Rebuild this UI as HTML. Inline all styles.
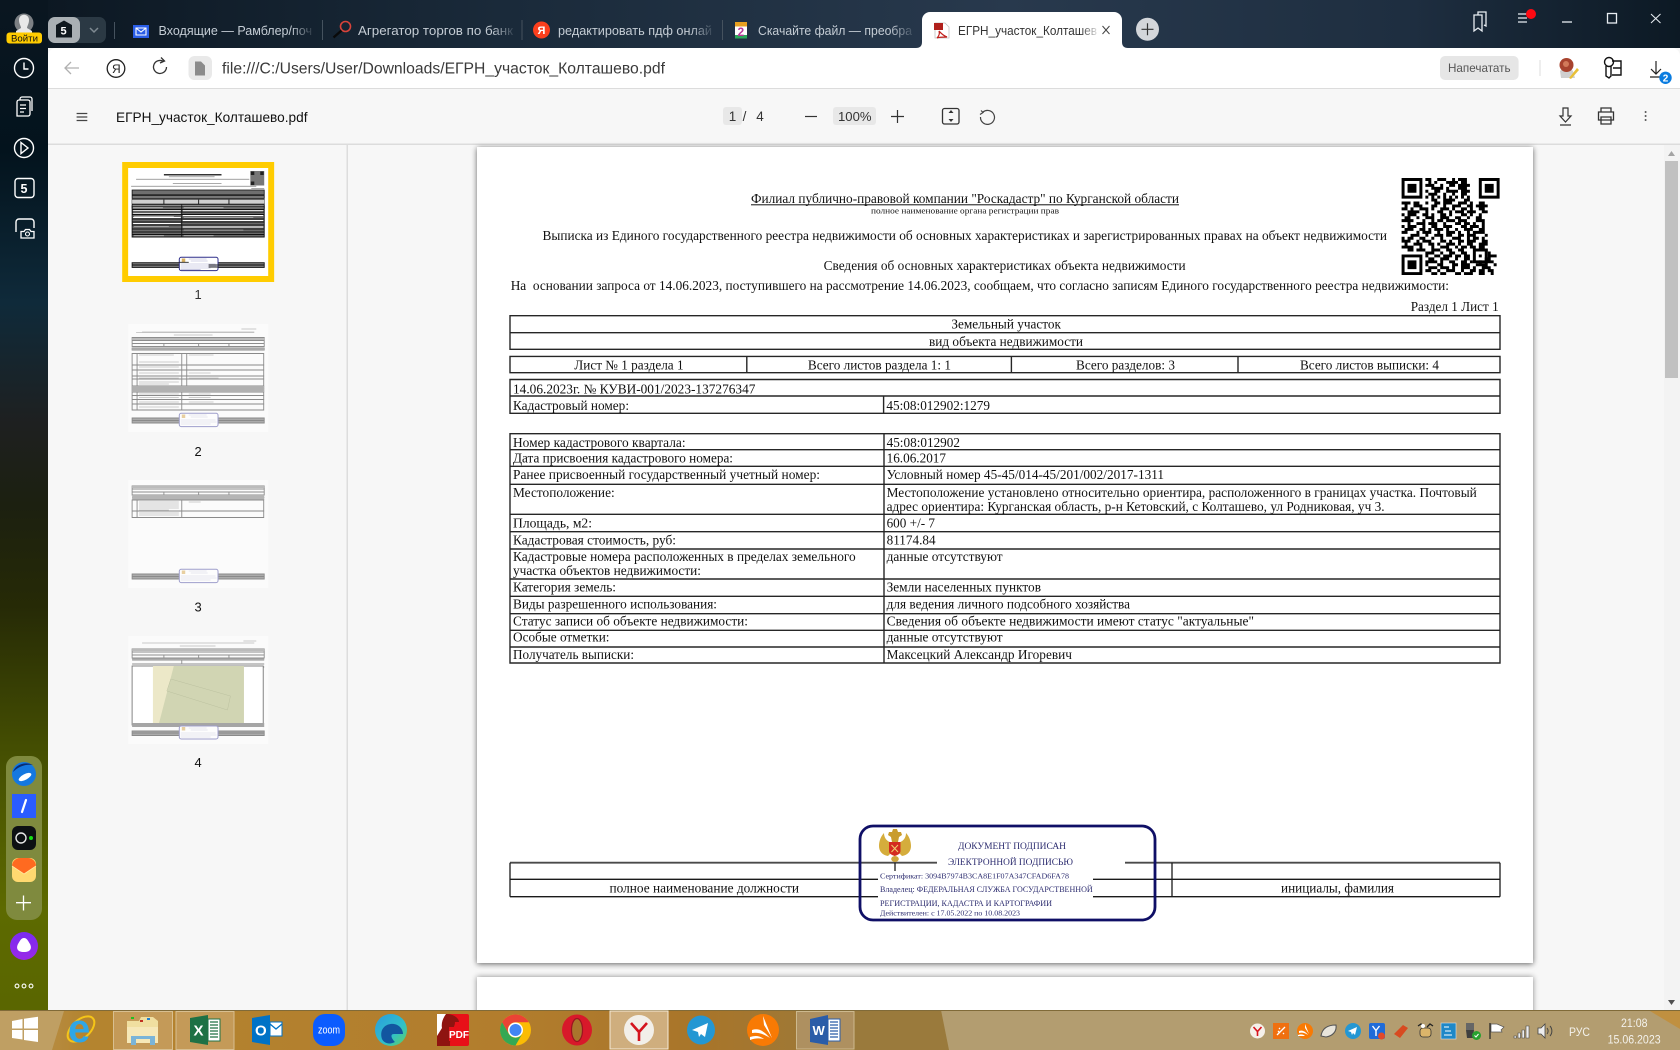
<!DOCTYPE html>
<html><head><meta charset="utf-8"><title>ЕГРН_участок_Колташево.pdf</title>
<style>
html,body{margin:0;padding:0;width:1680px;height:1050px;overflow:hidden;background:#f7f7f7}
svg{display:block;position:absolute;left:0;top:0}
.s{font-family:"Liberation Serif","Noto Serif CJK SC",serif;font-size:13.33px;fill:#111}
.a{font-family:"Liberation Sans","Noto Sans CJK SC",sans-serif}
.st{font-family:"Liberation Serif","Noto Serif CJK SC",serif;fill:#2d2d70}
</style></head><body>
<svg width="1680" height="1050" viewBox="0 0 1680 1050" xmlns="http://www.w3.org/2000/svg">
<defs>
<linearGradient id="gTop" x1="0" x2="1" y1="0" y2="0"><stop offset="0" stop-color="#0b1620"/><stop offset=".3" stop-color="#1a2a3a"/><stop offset=".6" stop-color="#28394d"/><stop offset=".84" stop-color="#1e2e40"/><stop offset="1" stop-color="#0c1924"/></linearGradient>
<linearGradient id="gSide" x1="0" x2="0" y1="0" y2="1"><stop offset="0" stop-color="#0a1620"/><stop offset=".15" stop-color="#03131d"/><stop offset=".3" stop-color="#0f2a3a"/><stop offset=".42" stop-color="#1e2020"/><stop offset=".5" stop-color="#1c2010"/><stop offset=".6" stop-color="#262a06"/><stop offset=".74" stop-color="#444e02"/><stop offset=".9" stop-color="#5d6a00"/><stop offset="1" stop-color="#5a6600"/></linearGradient>
<linearGradient id="gTask" x1="0" x2="1" y1="0" y2="0"><stop offset="0" stop-color="#b9965a"/><stop offset=".05" stop-color="#b4842f"/><stop offset=".3" stop-color="#b27d2d"/><stop offset=".42" stop-color="#a8752a"/><stop offset=".51" stop-color="#9a7a3c"/><stop offset="1" stop-color="#9b7c3e"/></linearGradient>
<linearGradient id="fd" x1="0" x2="1" y1="0" y2="0"><stop offset=".86" stop-color="#c4ccd4"/><stop offset="1" stop-color="#c4ccd4" stop-opacity=".15"/></linearGradient>
<linearGradient id="fa" x1="0" x2="1" y1="0" y2="0"><stop offset=".88" stop-color="#333"/><stop offset="1" stop-color="#333" stop-opacity=".15"/></linearGradient>
<linearGradient id="edge" x1="0" x2="1" y1="0" y2="1"><stop offset="0" stop-color="#2a9ce0"/><stop offset=".6" stop-color="#30c0c8"/><stop offset="1" stop-color="#60d060"/></linearGradient>
<linearGradient id="mail" x1="0" x2="0" y1="0" y2="1"><stop offset="0" stop-color="#ff5a1e"/><stop offset=".5" stop-color="#ffb030"/><stop offset="1" stop-color="#ffdb70"/></linearGradient>
<linearGradient id="ali" x1="0" x2="0" y1="0" y2="1"><stop offset="0" stop-color="#7a2cf0"/><stop offset="1" stop-color="#9a28e8"/></linearGradient>
</defs>

<!-- frame backgrounds -->
<rect x="0" y="0" width="1680" height="48" fill="url(#gTop)"/>
<rect x="0" y="0" width="48" height="1010" fill="url(#gSide)"/>
<path d="M48 1010V56a8 8 0 0 1 8-8H1672a8 8 0 0 1 8 8V1010z" fill="#fff"/>
<rect x="48" y="88" width="1632" height="922" fill="#f7f7f7"/>
<rect x="48" y="88" width="1632" height="1" fill="#dcdcdc"/>
<rect x="48" y="143.5" width="1632" height="1.5" fill="#dcdcdc"/>
<rect x="346.5" y="145" width="1.5" height="865" fill="#dddddd"/>

<!-- main pdf pages -->
<rect x="477" y="147" width="1056" height="816" fill="#fff" style="filter:drop-shadow(0 1px 3px rgba(0,0,0,.6))"/>
<rect x="477" y="977" width="1056" height="40" fill="#fff" style="filter:drop-shadow(0 0 3px rgba(0,0,0,.45))"/>

<!-- scrollbar -->
<rect x="1664" y="145" width="16" height="865" fill="#f3f3f3"/>
<rect x="1665" y="161" width="13" height="217" fill="#c1c1c1"/>
<path d="M1668 156l3.5-5 3.500 5z" fill="#a3a3a3"/>
<path d="M1668 1000l3.500 5 3.500-5z" fill="#505050"/>

<!-- PDF text -->
<g>
<text class="s" x="751" y="203" textLength="428" lengthAdjust="spacingAndGlyphs">Филиал публично-правовой компании "Роскадастр" по Курганской области</text>
<rect x="751" y="204.300" width="428" height="1" fill="#111"/>
<text class="s" style="font-size:8px" x="871" y="213.500" textLength="188" lengthAdjust="spacingAndGlyphs">полное наименование органа регистрации прав</text>
<text class="s" x="542.500" y="240" textLength="844.500" lengthAdjust="spacingAndGlyphs">Выписка из Единого государственного реестра недвижимости об основных характеристиках и зарегистрированных правах на объект недвижимости</text>
<text class="s" x="823.600" y="270" textLength="362" lengthAdjust="spacingAndGlyphs">Сведения об основных характеристиках объекта недвижимости</text>
<text class="s" x="510.700" y="290" textLength="938.300" lengthAdjust="spacingAndGlyphs" xml:space="preserve">На  основании запроса от 14.06.2023, поступившего на рассмотрение 14.06.2023, сообщаем, что согласно записям Единого государственного реестра недвижимости:</text>
<text class="s" x="1410.700" y="311" textLength="88" lengthAdjust="spacingAndGlyphs">Раздел 1 Лист 1</text>
</g>

<!-- tables -->
<path fill="none" stroke="#262626" stroke-width="1.400" d="M510 315.700H1500V349.300H510zM510 332.700H1500
M510 356.400H1500V372.700H510zM746.800 356.400V372.700M1011.400 356.400V372.700M1238 356.400V372.700
M510 379.500H1500V413.300H510zM510 396H1500M883.600 396V413.300
M510 433.700H1500V663H510zM884 433.700V663M510 449.700H1500M510 466.300H1500M510 484.300H1500M510 514.300H1500M510 531.700H1500M510 549H1500M510 579H1500M510 596.300H1500M510 613.700H1500M510 630.300H1500M510 647H1500"/>

<text class="s" x="951.400" y="328.700" textLength="109.600" lengthAdjust="spacingAndGlyphs">Земельный участок</text>
<text class="s" x="929" y="346" textLength="154" lengthAdjust="spacingAndGlyphs">вид объекта недвижимости</text>
<text class="s" x="574.300" y="369.300" textLength="109.300" lengthAdjust="spacingAndGlyphs">Лист № 1 раздела 1</text>
<text class="s" x="807.900" y="369.300" textLength="143.100" lengthAdjust="spacingAndGlyphs">Всего листов раздела 1: 1</text>
<text class="s" x="1076" y="369.300" textLength="99" lengthAdjust="spacingAndGlyphs">Всего разделов: 3</text>
<text class="s" x="1300" y="369.300" textLength="139" lengthAdjust="spacingAndGlyphs">Всего листов выписки: 4</text>
<text class="s" x="513" y="393.300" textLength="242.400" lengthAdjust="spacingAndGlyphs">14.06.2023г. № КУВИ-001/2023-137276347</text>
<text class="s" x="513" y="410" textLength="116" lengthAdjust="spacingAndGlyphs">Кадастровый номер:</text>
<text class="s" x="886.400" y="410" textLength="103.600" lengthAdjust="spacingAndGlyphs">45:08:012902:1279</text>

<text class="s" x="513" y="447" textLength="172.600" lengthAdjust="spacingAndGlyphs">Номер кадастрового квартала:</text>
<text class="s" x="886.600" y="447" textLength="73.400" lengthAdjust="spacingAndGlyphs">45:08:012902</text>
<text class="s" x="513" y="462.700" textLength="220" lengthAdjust="spacingAndGlyphs">Дата присвоения кадастрового номера:</text>
<text class="s" x="886.600" y="462.700" textLength="59.400" lengthAdjust="spacingAndGlyphs">16.06.2017</text>
<text class="s" x="513" y="479" textLength="307" lengthAdjust="spacingAndGlyphs">Ранее присвоенный государственный учетный номер:</text>
<text class="s" x="886.600" y="479" textLength="277.400" lengthAdjust="spacingAndGlyphs">Условный номер 45-45/014-45/201/002/2017-1311</text>
<text class="s" x="513" y="497" textLength="101.700" lengthAdjust="spacingAndGlyphs">Местоположение:</text>
<text class="s" x="886.600" y="497" textLength="590.200" lengthAdjust="spacingAndGlyphs">Местоположение установлено относительно ориентира, расположенного в границах участка. Почтовый</text>
<text class="s" x="886.600" y="511" textLength="498" lengthAdjust="spacingAndGlyphs">адрес ориентира: Курганская область, р-н Кетовский, с Колташево, ул Родниковая, уч 3.</text>
<text class="s" x="513" y="527.700" textLength="79" lengthAdjust="spacingAndGlyphs">Площадь, м2:</text>
<text class="s" x="886.600" y="527.700" textLength="48.400" lengthAdjust="spacingAndGlyphs">600 +/- 7</text>
<text class="s" x="513" y="544.300" textLength="163" lengthAdjust="spacingAndGlyphs">Кадастровая стоимость, руб:</text>
<text class="s" x="886.600" y="544.300" textLength="49" lengthAdjust="spacingAndGlyphs">81174.84</text>
<text class="s" x="513" y="561" textLength="342.700" lengthAdjust="spacingAndGlyphs">Кадастровые номера расположенных в пределах земельного</text>
<text class="s" x="513" y="575" textLength="188" lengthAdjust="spacingAndGlyphs">участка объектов недвижимости:</text>
<text class="s" x="886.600" y="561" textLength="116" lengthAdjust="spacingAndGlyphs">данные отсутствуют</text>
<text class="s" x="513" y="591.700" textLength="103" lengthAdjust="spacingAndGlyphs">Категория земель:</text>
<text class="s" x="886.600" y="591.700" textLength="154.400" lengthAdjust="spacingAndGlyphs">Земли населенных пунктов</text>
<text class="s" x="513" y="608.700" textLength="204" lengthAdjust="spacingAndGlyphs">Виды разрешенного использования:</text>
<text class="s" x="886.600" y="608.700" textLength="243.400" lengthAdjust="spacingAndGlyphs">для ведения личного подсобного хозяйства</text>
<text class="s" x="513" y="625.700" textLength="235" lengthAdjust="spacingAndGlyphs">Статус записи об объекте недвижимости:</text>
<text class="s" x="886.600" y="625.700" textLength="367.400" lengthAdjust="spacingAndGlyphs">Сведения об объекте недвижимости имеют статус "актуальные"</text>
<text class="s" x="513" y="641.700" textLength="96.500" lengthAdjust="spacingAndGlyphs">Особые отметки:</text>
<text class="s" x="886.600" y="641.700" textLength="116" lengthAdjust="spacingAndGlyphs">данные отсутствуют</text>
<text class="s" x="513" y="659" textLength="121" lengthAdjust="spacingAndGlyphs">Получатель выписки:</text>
<text class="s" x="886.600" y="659" textLength="185.400" lengthAdjust="spacingAndGlyphs">Максецкий Александр Игоревич</text>

<!-- signature table -->
<path fill="none" stroke="#4a4a4a" stroke-width="1.800" d="M510 862.700H937M1125 862.700H1500"/>
<path fill="none" stroke="#1a1a1a" stroke-width="1.300" d="M510 879.300H878M1093 879.300H1500M510 896.700H878M1093 896.700H1500M510 862.700V896.700M1500 862.700V896.700M1172 862.700V896.700M895 862.700V871"/>
<text class="s" x="609.500" y="892.300" textLength="189.500" lengthAdjust="spacingAndGlyphs">полное наименование должности</text>
<text class="s" x="1281" y="892.300" textLength="113" lengthAdjust="spacingAndGlyphs">инициалы, фамилия</text>

<!-- stamp -->
<rect x="860" y="826" width="295" height="94" rx="13" fill="none" stroke="#0f0f66" stroke-width="2.800"/>
<g>
<path d="M893 843C887 842 884 838 884 833 881 836 879 841 879 846 879 851 882 855 888 856L892 852z" fill="#d5ad3c"/>
<path d="M897 843C903 842 906 838 906 833 909 836 911 841 911 846 911 851 908 855 902 856L898 852z" fill="#d5ad3c"/>
<path d="M893 829h4l1 3 3 0 1 3-3 2-1 5h-6l-1-5-3-2 1-3 3 0z" fill="#c99c2e"/>
<path d="M889 842h11.500v9c0 3-3 4-5.750 5-2.750-1-5.750-2-5.750-5z" fill="#d42b20"/>
<path d="M891.500 845l6.500 7M898 845l-6.500 7" stroke="#f0d070" stroke-width="1"/>
<ellipse cx="895" cy="859" rx="3.800" ry="3" fill="#cfa53a"/>
</g>
<text class="st" style="font-size:9px" x="958" y="849" textLength="108" lengthAdjust="spacingAndGlyphs">ДОКУМЕНТ ПОДПИСАН</text>
<text class="st" style="font-size:9px" x="948" y="865" textLength="125" lengthAdjust="spacingAndGlyphs">ЭЛЕКТРОННОЙ ПОДПИСЬЮ</text>
<text class="st" style="font-size:7.500px" x="880" y="878.700" textLength="189" lengthAdjust="spacingAndGlyphs">Сертификат: 3094B7974B3CA8E1F07A347CFAD6FA78</text>
<text class="st" style="font-size:8px" x="880" y="892" textLength="212.700" lengthAdjust="spacingAndGlyphs">Владелец: ФЕДЕРАЛЬНАЯ СЛУЖБА ГОСУДАРСТВЕННОЙ</text>
<text class="st" style="font-size:8px" x="880" y="906" textLength="172" lengthAdjust="spacingAndGlyphs">РЕГИСТРАЦИИ, КАДАСТРА И КАРТОГРАФИИ</text>
<text class="st" style="font-size:7.500px" x="880" y="915.700" textLength="140" lengthAdjust="spacingAndGlyphs">Действителен: с 17.05.2022 по 10.08.2023</text>

<!-- QR code -->
<g transform="translate(1401.600 178) scale(2.970 2.940)">
<path fill="#000" fill-rule="evenodd" d="M0 0h7v7H0zM1 1v5h5V1zM2 2h3v3H2zM26 0h7v7h-7zM27 1v5h5V1zM28 2h3v3h-3zM0 26h7v7H0zM1 27v5h5v-5zM2 28h3v3H2zM24 24h5v5h-5zM25 25v3h3v-3zM26 26h1v1h-1z"/>
<path fill="none" stroke="#000" stroke-width="1" d="M8 .5h2m2 0h3m2 0h1m1 0h3M9 1.500h1m1 0h1m3 0h4m1 0h2M8 2.500h3m2 0h1m2 0h2m1 0h4M10 3.500h4m1 0h1m3 0h3M8 4.500h1m2 0h2m2 0h4m1 0h3M9 5.500h3m2 0h1m2 0h1m2 0h2M8 6.500h1m1 0h1m1 0h1m1 0h1m1 0h1m1 0h1m1 0h1m1 0h1M10 7.500h2m2 0h4m3 0h2
M0 8.500h3m1 0h2m2 0h1m2 0h2m1 0h3m2 0h3m1 0h1m2 0h2M1 9.500h1m2 0h3m3 0h2m2 0h1m2 0h3m2 0h2m1 0h4M0 10.500h2m1 0h1m2 0h3m1 0h1m2 0h3m1 0h1m2 0h2m1 0h1m2 0h2M2 11.500h4m2 0h1m3 0h2m2 0h1m1 0h3m1 0h3m2 0h2M0 12.500h1m1 0h3m2 0h2m1 0h1m2 0h2m1 0h1m3 0h2m1 0h1m2 0h1M1 13.500h2m2 0h1m2 0h3m2 0h3m2 0h2m2 0h1m2 0h2M0 14.500h4m3 0h1m2 0h1m1 0h2m1 0h3m1 0h3m3 0h3M2 15.500h1m2 0h3m1 0h3m2 0h1m3 0h2m1 0h2m1 0h1m2 0h1M0 16.500h1m1 0h3m2 0h1m2 0h2m2 0h3m3 0h2m1 0h3m1 0h1M1 17.500h3m2 0h2m1 0h1m1 0h3m1 0h1m2 0h1m2 0h3m2 0h2M0 18.500h2m3 0h1m1 0h3m2 0h1m2 0h3m1 0h1m2 0h1m1 0h4M3 19.500h3m2 0h1m2 0h3m1 0h2m2 0h2m1 0h3m3 0h1M0 20.500h1m1 0h2m2 0h2m2 0h1m2 0h1m3 0h3m2 0h1m1 0h2m1 0h1M0 21.500h3m2 0h1m1 0h3m3 0h2m1 0h1m2 0h2m1 0h3m2 0h2M1 22.500h1m2 0h3m2 0h2m1 0h1m2 0h3m1 0h1m2 0h2m2 0h3M0 23.500h4m2 0h1m3 0h1m2 0h3m2 0h1m1 0h2m1 0h2m1 0h2M2 24.500h2m1 0h3m2 0h3m2 0h2m2 0h2m6 0h2M8 25.500h3m2 0h1m2 0h2m2 0h2m7 0h1M8 26.500h1m2 0h2m1 0h3m1 0h2m1 0h2m6 0h3M9 27.500h2m2 0h3m2 0h1m2 0h2m5 0h2M8 28.500h4m1 0h1m2 0h2m2 0h2m1 0h1m2 0h1m1 0h3M8 29.500h1m3 0h2m3 0h2m1 0h3m2 0h4m2 0h1M9 30.500h3m1 0h3m1 0h1m2 0h3m1 0h1m2 0h3M8 31.500h2m2 0h1m2 0h3m2 0h1m2 0h2m1 0h2m1 0h2M10 32.500h2m1 0h2m3 0h2m1 0h3m2 0h2m2 0h1"/>
</g>

<!-- thumbnails -->
<g transform="scale(.9933 1)">
<!-- page 1 -->
<rect x="123" y="162" width="153" height="120" fill="#ffcc00"/>
<rect x="129" y="168" width="141" height="108" fill="#fff"/>
<rect x="165" y="174" width="58" height="1.500" fill="#333"/>
<rect x="170" y="176.200" width="46" height="1" fill="#aaa"/>
<rect x="137" y="178.800" width="114" height="1.100" fill="#aaa"/>
<rect x="174" y="183" width="49" height="1" fill="#aaa"/>
<rect x="132" y="185.800" width="126" height="1.100" fill="#aaa"/>
<rect x="252" y="171" width="14" height="14.500" fill="#777"/>
<path d="M252.500 171.500h3.500v3.500h-3.500zM262 171.500h3.500v3.500H262zM252.500 181.500h3.500v3.500h-3.500z" fill="#222"/>
<rect x="253" y="188" width="13" height="1" fill="#aaa"/>
<rect x="133" y="190" width="133" height="4.500" fill="#6f6f6f"/>
<rect x="133" y="195" width="133" height="3.500" fill="#777"/>
<path fill="none" stroke="#111" stroke-width=".8" d="M133 190h133v8.500H133zM133 194.500h133M133 195.500h133M133 199.500h133v4.500H133zM133 204.500h133v3.500H133zM133 208h133M183 204v4"/>
<rect x="133" y="199.800" width="133" height="3.800" fill="#cfcfcf"/>
<path stroke="#111" stroke-width=".9" d="M165 199.500v4.500M200 199.500v4.500M230.500 199.500v4.500"/>
<rect x="133" y="206" width="133" height="31" fill="#6a6a6a"/>
<path fill="none" stroke="#111" stroke-width=".9" d="M133 206h133v31H133zM183 206v31M133 209.500h133M133 212h133M133 214.500h133M133 219h133M133 222h133M133 225h133M133 229h133M133 232h133M133 234.500h133"/>
<path stroke="#fff" stroke-width="1" d="M134 210.800h48M184 210.800h81M134 213.200h48M184 215.500h81M134 217.500h48M184 220.500h81M134 223.500h48M184 227h81"/>
<path stroke="#d8d8d8" stroke-width=".6" d="M134 207.800h30M185 207.800h40M135 216.300h40M185 217.500h70M135 226.500h35M185 230h60M135 235.800h30M185 235.800h30"/>
<rect x="133" y="262.700" width="133" height="4.700" fill="#777"/>
<path fill="none" stroke="#111" stroke-width=".9" d="M133 262.700h133v4.700H133zM133 265h133"/>
<rect x="180.500" y="257.300" width="39" height="13.300" rx="2" fill="#fff" stroke="#2e2e8a" stroke-width="1"/>
<rect x="183" y="258.500" width="3.500" height="3.500" fill="#d8b060"/>
<path stroke="#a8a8d0" stroke-width=".6" d="M190 259h18M192 261h17M182 264h35M182 266h36M182 268h30M182 269.600h20"/>
<path stroke="#222" stroke-width=".9" d="M180 262.300h10M210 265h10M210 267h10"/>
<text class="a" style="font-size:13px" x="199.500" y="299" text-anchor="middle" fill="#333">1</text>

<!-- page 2 -->
<rect x="129" y="324" width="141" height="108" fill="#fbfbfb"/>
<path stroke="#bbb" stroke-width=".8" d="M143 332h113M243 329h15M137 332.500h119M175 335h39"/>
<path fill="none" stroke="#8d8d8d" stroke-width=".9" d="M133 337.500h133v9h-133zM133 340.500h133M133 343.500h133M133 346.500h133M165 343.500v3M200 343.500v3M230.500 343.500v3M133 348h133v2h-133zM183 348v2"/>
<rect x="133" y="338" width="133" height="2" fill="#bbb"/>
<rect x="133" y="348" width="133" height="2" fill="#aaa"/>
<path fill="none" stroke="#8a8a8a" stroke-width=".9" d="M133 353.500h132.500v56.500H133zM138 353.500v56.500M183 353.500v56.500M188 353.500v33M188 365h78M133 365h55M133 370h133M133 376h133M133 379h133M133 386h133M133 388.500h133M133 392h133M133 395.500h133M133 399.500h133M133 404h133"/>
<rect x="133" y="386" width="133" height="6" fill="#b0b0b0"/>
<path stroke="#bdbdbd" stroke-width=".7" d="M140 355h35M190 355h25M140 362h40M140 367h40M140 373h40M190 373h22M140 378h40M190 378h30M140 382h40M140 384h30M140 394h40M190 394h22M140 397.500h40M190 397.500h22M140 402h40M190 402h25M140 407h40"/>
<rect x="133" y="418" width="133" height="5" fill="#ababab"/>
<path fill="none" stroke="#8a8a8a" stroke-width=".9" d="M133 418h133v5H133zM133 420.500h133"/>
<rect x="180.500" y="413.300" width="39" height="13.300" rx="2" fill="#fdfdfd" stroke="#9e9ecb" stroke-width="1"/>
<rect x="183" y="414.500" width="3.500" height="3.500" fill="#e8cfa0"/>
<path stroke="#cfcfe4" stroke-width=".6" d="M190 415h18M192 417h17M182 420h35M182 422h36M182 424h30"/>
<text class="a" style="font-size:13px" x="199.500" y="456" text-anchor="middle" fill="#111">2</text>

<!-- page 3 -->
<rect x="129" y="480" width="141" height="108" fill="#fbfbfb"/>
<path fill="none" stroke="#8d8d8d" stroke-width=".9" d="M133 486h133v9h-133zM133 489h133M133 492h133M133 495h133M133 497.500h133M165 492v3M200 492v3M230.500 492v3"/>
<rect x="133" y="486" width="133" height="2" fill="#bbb"/>
<rect x="133" y="495" width="133" height="5" fill="#b5b5b5"/>
<path fill="none" stroke="#8a8a8a" stroke-width=".9" d="M133 500h132.500v17.500H133zM138 500v17.500M183 500v17.500M133 511h133"/>
<path stroke="#bdbdbd" stroke-width=".7" d="M140 502h40M140 504h40M140 506h40M140 508h40M140 510h30M140 513h40M140 515h40M190 502h12"/>
<rect x="133" y="574" width="133" height="5" fill="#ababab"/>
<path fill="none" stroke="#8a8a8a" stroke-width=".9" d="M133 574h133v5H133zM133 576.500h133"/>
<rect x="180.500" y="569.300" width="39" height="13.300" rx="2" fill="#fdfdfd" stroke="#9e9ecb" stroke-width="1"/>
<rect x="183" y="570.500" width="3.500" height="3.500" fill="#e8cfa0"/>
<path stroke="#cfcfe4" stroke-width=".6" d="M190 571h18M192 573h17M182 576h35M182 578h36M182 580h30"/>
<text class="a" style="font-size:13px" x="199.500" y="611.500" text-anchor="middle" fill="#111">3</text>

<!-- page 4 -->
<rect x="129" y="636" width="141" height="108" fill="#fbfbfb"/>
<path stroke="#bbb" stroke-width=".8" d="M143 643h113M245 641h13M181 646h36"/>
<path fill="none" stroke="#8d8d8d" stroke-width=".9" d="M133 649h133v9h-133zM133 652h133M133 655h133M133 658h133M133 660h133M133 664h133M133 667h133M165 655v3M200 655v3M230.500 655v3M183 660v3.500"/>
<rect x="133" y="649" width="133" height="2" fill="#bbb"/>
<rect x="133" y="658.500" width="133" height="1.500" fill="#aaa"/>
<rect x="133" y="666" width="132" height="59" fill="#fff" stroke="#777" stroke-width=".9"/>
<rect x="154" y="666" width="91.600" height="57.500" fill="#d1d5b3"/>
<path d="M154 666h21l-15 57.500h-6z" fill="#ece8c8"/>
<path fill="none" stroke="#bcc1a0" stroke-width=".5" d="M172 679l60 17-3 14-61-19z"/>
<rect x="133" y="723" width="133" height="4" fill="#a5a5a5"/>
<rect x="133" y="731" width="133" height="4.500" fill="#ababab"/>
<path fill="none" stroke="#8a8a8a" stroke-width=".9" d="M133 731h133v4.500H133zM133 733h133"/>
<rect x="180.500" y="726" width="39" height="13" rx="2" fill="#fdfdfd" stroke="#9e9ecb" stroke-width="1"/>
<rect x="183" y="727" width="3.500" height="3.500" fill="#e8cfa0"/>
<path stroke="#cfcfe4" stroke-width=".6" d="M190 728h18M192 730h17M182 733h35M182 735h36M182 737h30"/>
<text class="a" style="font-size:13px" x="199.500" y="767" text-anchor="middle" fill="#111">4</text>
</g>

<!-- tab strip -->
<circle cx="24" cy="23" r="9.500" fill="#7c8084"/>
<path d="M19 20c0-7 10-7 10 0 0 4-2 6-2 8l5 3v2H16v-2l5-3c0-2-2-4-2-8z" fill="#e8e8e8"/>
<rect x="6.500" y="32.500" width="35.500" height="11" rx="3" fill="#ffcc00"/>
<text class="a" style="font-size:9.500px" x="11" y="41.500" textLength="27" lengthAdjust="spacingAndGlyphs" fill="#111">Войти</text>

<rect x="48" y="17" width="58" height="26" rx="7" fill="#2b3944"/>
<rect x="48" y="17" width="32" height="26" rx="7" fill="#aab0b4"/>
<path d="M64 20.500l8 4.500v12.500H56V25z" fill="#10181e"/>
<text class="a" style="font-size:11px;font-weight:bold" x="60.500" y="34.500" fill="#fff">5</text>
<path d="M90 28l4 4 4-4" fill="none" stroke="#7f8a92" stroke-width="1.500"/>
<path stroke="#45525e" stroke-width="1" d="M114.500 22v17M322.500 20v20M522 20v20M722.500 20v20"/>

<rect x="133" y="25" width="16" height="13" fill="#2a5ee8"/>
<path d="M136 28h10v7h-10zM136 28l5 4 5-4" fill="none" stroke="#fff" stroke-width="1.100"/>
<text class="a" style="font-size:13px" x="158.500" y="35" textLength="153.500" lengthAdjust="spacingAndGlyphs" fill="url(#fd)">Входящие — Рамблер/поч</text>

<circle cx="345.500" cy="26.500" r="5" fill="none" stroke="#d8433a" stroke-width="1.600"/>
<path d="M341.500 30.500l-8 7" stroke="#0a0a0a" stroke-width="2.400"/>
<text class="a" style="font-size:13px" x="358" y="35" textLength="155" lengthAdjust="spacingAndGlyphs" fill="url(#fd)">Агрегатор торгов по банк</text>

<circle cx="541.500" cy="30" r="8.500" fill="#fc3f1d"/>
<text class="a" style="font-size:11px;font-weight:bold" x="537.500" y="34" fill="#fff">Я</text>
<text class="a" style="font-size:13px" x="558" y="35" textLength="154" lengthAdjust="spacingAndGlyphs" fill="url(#fd)">редактировать пдф онлай</text>

<rect x="735" y="22" width="12" height="4.500" fill="#e8a020"/>
<rect x="735" y="26.500" width="12" height="11" fill="#fff"/>
<rect x="735" y="35" width="12" height="3.500" fill="#2ba85a"/>
<text class="a" style="font-size:12px;font-weight:bold" x="737.500" y="36" fill="#b8389a">2</text>
<text class="a" style="font-size:13px" x="758" y="35" textLength="154" lengthAdjust="spacingAndGlyphs" fill="url(#fd)">Скачайте файл — преобра</text>

<path d="M916 48c4 0 6-2 6-6V20a8 8 0 0 1 8-8h184a8 8 0 0 1 8 8v22c0 4 2 6 6 6z" fill="#fff"/>
<path d="M935 23h10l4 4v11h-14z" fill="#fff" stroke="#c0c0c0" stroke-width=".8"/>
<rect x="934" y="23" width="9" height="7" fill="#b0201c"/>
<path d="M939 31c2 2 3 4 8 6-4 0-8 0-10 1 2-2 3-4 2-7z" fill="none" stroke="#c0201c" stroke-width="1.200"/>
<text class="a" style="font-size:13px" x="958" y="35" textLength="139" lengthAdjust="spacingAndGlyphs" fill="url(#fa)">ЕГРН_участок_Колташев</text>
<path d="M1102.500 26l7 8M1109.500 26l-7 8" stroke="#444" stroke-width="1"/>
<circle cx="1147.500" cy="29.300" r="11.500" fill="#d3d6da"/>
<path d="M1141.500 29.300h12M1147.500 23.300v12" stroke="#333" stroke-width="1.200"/>

<!-- window controls -->
<path d="M1474 15h8v16l-4-3-4 3zM1478 15v-3h8v14l-2-1" fill="none" stroke="#e8edf2" stroke-width="1.300"/>
<path d="M1518 14h9M1518 18h9M1518 22h9" stroke="#e8edf2" stroke-width="1.200"/>
<circle cx="1531" cy="14" r="5" fill="#ff0a12"/>
<path d="M1562 22h10" stroke="#e8edf2" stroke-width="1.300"/>
<rect x="1607.500" y="13.500" width="9" height="9.500" fill="none" stroke="#e8edf2" stroke-width="1.300"/>
<path d="M1651 14l9.500 9M1660.500 14l-9.500 9" stroke="#e8edf2" stroke-width="1"/>

<!-- address bar -->
<path d="M79 68H65M71 62l-6 6 6 6" fill="none" stroke="#b0b0b0" stroke-width="1.300"/>
<circle cx="116" cy="68.500" r="8.800" fill="none" stroke="#222" stroke-width="1.300"/>
<text class="a" style="font-size:12px" x="112" y="73" fill="#222">Я</text>
<path d="M166.500 67a6.500 6.500 0 1 1-3-5.500M161 57.500l3.500 3.500-4.500 2" fill="none" stroke="#333" stroke-width="1.300"/>
<rect x="188.500" y="56" width="23.500" height="24" rx="6" fill="#e9e9e9"/>
<path d="M195 61.500h6l4 4v10h-10z" fill="#8b8b8b"/>
<text class="a" style="font-size:15.500px" x="222" y="73.300" textLength="443" lengthAdjust="spacingAndGlyphs" fill="#3a3a3a">file:///C:/Users/User/Downloads/ЕГРН_участок_Колташево.pdf</text>
<rect x="1440" y="56" width="78.600" height="24" rx="5" fill="#e6e6e6"/>
<text class="a" style="font-size:12px" x="1448" y="72" textLength="62.600" lengthAdjust="spacingAndGlyphs" fill="#555">Напечатать</text>
<rect x="1539.500" y="60" width="1" height="16" fill="#dedede"/>
<path d="M1560 71c2-3 11-3 13 0l2 7h-14z" fill="#cfcfcf"/>
<circle cx="1566.500" cy="65" r="7" fill="#a8432e"/>
<circle cx="1566" cy="64" r="3" fill="#d27a5a"/>
<path d="M1569 78l8-10 2 2-8 9z" fill="#e8c038"/>
<circle cx="1609" cy="62" r="4.500" fill="none" stroke="#111" stroke-width="1.400"/>
<path d="M1606 66v10l3 2 2-2v-10M1612 61h9v14h-9M1613 68h8" fill="none" stroke="#111" stroke-width="1.400"/>
<path d="M1656 61v13M1651 69l5 5 5-5M1650 77h12" fill="none" stroke="#222" stroke-width="1.200"/>
<circle cx="1665.500" cy="77.800" r="6.200" fill="#0a7ce0"/>
<text class="a" style="font-size:10px;font-weight:bold" x="1662.700" y="81.500" fill="#fff">2</text>

<!-- pdf toolbar -->
<path d="M76.600 113.500h10.700M76.600 117h10.700M76.600 120.500h10.700" stroke="#444" stroke-width="1.200"/>
<text class="a" style="font-size:14px;-webkit-text-stroke:.2px #111" x="116" y="122" textLength="191.500" lengthAdjust="spacingAndGlyphs" fill="#111">ЕГРН_участок_Колташево.pdf</text>
<rect x="723" y="107" width="19" height="18" rx="3" fill="#e8e8e8"/>
<text class="a" style="font-size:13.500px" x="732.500" y="121" text-anchor="middle" fill="#333">1</text>
<text class="a" style="font-size:13.500px" x="744.500" y="121" text-anchor="middle" fill="#333">/</text>
<text class="a" style="font-size:13.500px" x="760" y="121" text-anchor="middle" fill="#333">4</text>
<path d="M805 116.500h12" stroke="#333" stroke-width="1.200"/>
<rect x="833" y="107" width="43" height="18" rx="3" fill="#e8e8e8"/>
<text class="a" style="font-size:13px" x="838" y="121" textLength="33.500" lengthAdjust="spacingAndGlyphs" fill="#333">100%</text>
<path d="M891 116.500h13M897.500 110v13" stroke="#333" stroke-width="1.200"/>
<rect x="942.500" y="108.500" width="16.500" height="15.500" rx="2" fill="none" stroke="#333" stroke-width="1.300"/>
<path d="M948.500 113l2.500-3 2.500 3zM948.500 119l2.500 3 2.500-3z" fill="#333"/>
<path d="M983 112a7 7 0 1 1-2.500 5M981 110.500l2 2-3 2" fill="none" stroke="#444" stroke-width="1.200"/>
<path d="M1563 108h5v8h3l-5.500 6-5.500-6h3zM1560 125h11" fill="none" stroke="#333" stroke-width="1.200"/>
<path d="M1601 112v-4h10v4M1598.500 112h15v8h-15zM1601 117h10v7h-10z" fill="#f7f7f7" stroke="#333" stroke-width="1.300"/>
<circle cx="1645.600" cy="112" r="1" fill="#555"/><circle cx="1645.600" cy="116" r="1" fill="#555"/><circle cx="1645.600" cy="120" r="1" fill="#555"/>

<!-- sidebar icons -->
<circle cx="24" cy="68" r="9.500" fill="none" stroke="#fff" stroke-width="1.400"/>
<path d="M24 62.500V69h4.500" fill="none" stroke="#fff" stroke-width="1.400"/>
<path d="M19 100h9a2 2 0 0 1 2 2v12a2 2 0 0 1-2 2h-11v-14a2 2 0 0 1 2-2zM20 100v-1a2 2 0 0 1 2-2h8a2 2 0 0 1 2 2v12M20 105h6M20 108.500h6M20 112h4" fill="none" stroke="#fff" stroke-width="1.300"/>
<circle cx="24" cy="148" r="9.500" fill="none" stroke="#fff" stroke-width="1.400"/>
<path d="M21 142.500l7 5.500-7 5.500z" fill="none" stroke="#fff" stroke-width="1.400"/>
<rect x="15" y="178.500" width="19" height="19" rx="3" fill="none" stroke="#fff" stroke-width="1.400"/>
<text class="a" style="font-size:12.500px;font-weight:bold" x="20.500" y="193" fill="#fff">5</text>
<path d="M16 232v-10a3 3 0 0 1 3-3h12a3 3 0 0 1 3 3v6" fill="none" stroke="#fff" stroke-width="1.400"/>
<path d="M21 237.500v-6h3l1.500-2h4l1.500 2h3v6.500H21z" fill="#08202d" stroke="#fff" stroke-width="1.300"/>
<circle cx="27.500" cy="234" r="2" fill="none" stroke="#fff" stroke-width="1.100"/>

<rect x="6" y="756" width="36" height="164" rx="11" fill="#7f8a3e"/>
<circle cx="24" cy="774" r="12" fill="#1478e0"/>
<path d="M13 772c2-7 12-11 20-7-7-1-14 1-20 7z" fill="#0b2c70"/>
<ellipse cx="25" cy="777" rx="7" ry="2.800" fill="#fff" transform="rotate(-28 25 777)"/>
<rect x="12" y="794" width="24" height="24" fill="#2a5cff"/>
<path d="M26 800l-4 12" stroke="#fff" stroke-width="2.200" stroke-linecap="round"/>
<rect x="12" y="826" width="24" height="24" rx="6" fill="#0d1013"/>
<circle cx="21" cy="838" r="5" fill="none" stroke="#e8e8e8" stroke-width="1.400"/>
<circle cx="31" cy="838" r="2" fill="#14e014"/>
<rect x="12" y="858" width="24" height="24" rx="6" fill="#ffd970"/>
<path d="M12 866a8 8 0 0 1 8-8h8a8 8 0 0 1 8 8l-12 8z" fill="#ff6a20"/>
<path d="M12 866l12 8 12-8" fill="none" stroke="#ffe9a0" stroke-width=".8"/>
<path d="M16 902.700h15M23.500 895.500v15" stroke="#fff" stroke-width="1.300"/>
<circle cx="24" cy="946" r="14" fill="url(#ali)"/>
<path d="M24 938c3 0 4 3 6 6 2 4 1 8-6 8s-8-4-6-8c2-3 3-6 6-6z" fill="#fff"/>
<circle cx="17" cy="986" r="1.900" fill="none" stroke="#fff" stroke-width="1.100"/>
<circle cx="24" cy="986" r="1.900" fill="none" stroke="#fff" stroke-width="1.100"/>
<circle cx="31" cy="986" r="1.900" fill="none" stroke="#fff" stroke-width="1.100"/>

<!-- taskbar -->
<rect x="0" y="1010" width="1680" height="40" fill="url(#gTask)"/>
<path d="M941 1010H1680V1050H949z" fill="#b39d70"/>
<rect x="0" y="1010" width="1680" height="1" fill="#806a38"/>
<path d="M0 1011H64L52 1050H0z" fill="#bf9f63"/>
<path d="M1650 1011h30v18z" fill="#c09040"/>
<path d="M12 1021l10.500-2v9.500H12zM24 1018.800l14-2v11.700H24zM12 1030h10.500v9.500l-10.500-1.500zM24 1030h14v12l-14-2z" fill="#fff"/>

<ellipse cx="81" cy="1029" rx="16" ry="9" fill="none" stroke="#f5c518" stroke-width="2" transform="rotate(-42 81 1029)"/>
<text class="a" style="font-size:40px;font-weight:bold" x="68" y="1042" fill="#2fa6e6">e</text>

<rect x="113.500" y="1011.500" width="59" height="38" fill="#c49a58" stroke="#d8bf90" stroke-width="1"/>
<path d="M127 1021h12l2-4h12l5 4v21h-31z" fill="#f0dfa0"/>
<rect x="127" y="1027" width="31" height="16" fill="#f6e8b8"/>
<rect x="131" y="1017" width="3" height="2" fill="#20c020"/>
<rect x="140" y="1020" width="3" height="2" fill="#c03020"/>
<rect x="147" y="1018" width="3" height="2" fill="#2080d0"/>
<path d="M131 1045v-9h24v9h-5v-6h-14v6z" fill="#7ab4d8"/>

<rect x="176" y="1011.500" width="58" height="38" fill="#c49a58" stroke="#d8bf90" stroke-width="1"/>
<path d="M190 1018l18-3v30l-18-3z" fill="#1e7145"/>
<rect x="208" y="1019" width="12" height="22" fill="#fff" stroke="#1e7145" stroke-width="1"/>
<path d="M210 1022h8M210 1025h8M210 1028h8M210 1031h8M210 1034h8M210 1037h8" stroke="#1e7145" stroke-width="1.300"/>
<text class="a" style="font-size:15px;font-weight:bold" x="193.500" y="1035.500" fill="#fff">X</text>

<path d="M252 1018l18-3v30l-18-3z" fill="#0072c6"/>
<rect x="270" y="1022" width="12" height="14" fill="#fff" stroke="#0072c6" stroke-width="1"/>
<path d="M270 1024l6 5 6-5" fill="none" stroke="#0072c6" stroke-width="1.300"/>
<text class="a" style="font-size:15px;font-weight:bold" x="255" y="1035.500" fill="#fff">O</text>

<rect x="313" y="1014" width="32" height="32" rx="12" fill="#0b5cff"/>
<text class="a" style="font-size:11px" x="318" y="1033.500" textLength="22" lengthAdjust="spacingAndGlyphs" fill="#fff">zoom</text>

<circle cx="391" cy="1030" r="16" fill="url(#edge)"/>
<path d="M382 1039c-3-9 3-16 12-15 6 1 9 6 9 10h-9c-4 0-3 4 1 8-6 3-11 1-13-3z" fill="#1256a0"/>

<rect x="437" y="1014" width="32" height="32" rx="2" fill="#e81018"/>
<path d="M437 1014h10c6 0 12 4 12 8h-4c0 6-5 8-5 24h-13z" fill="#8f1410"/>
<path d="M437 1014h9c-3 4-5 9-4 14l-5 8z" fill="#fff"/>
<rect x="449" y="1027" width="20" height="14" fill="#e81018"/>
<text class="a" style="font-size:10px;font-weight:bold" x="449" y="1038" textLength="20" lengthAdjust="spacingAndGlyphs" fill="#fff">PDF</text>

<g>
<circle cx="515.500" cy="1030" r="15.500" fill="#fbbc04"/>
<path d="M515.500 1014.500a15.500 15.500 0 0 0-13.400 7.750l6.700 11.600a7.750 7.750 0 0 1 6.700-11.600h13.400a15.500 15.500 0 0 0-13.400-7.750z" fill="#ea4335"/>
<path d="M502.100 1022.250a15.500 15.500 0 0 0 13.400 23.250l6.700-11.600a7.750 7.750 0 0 1-13.400 0z" fill="#34a853"/>
<circle cx="515.500" cy="1030" r="7.500" fill="#fff"/>
<circle cx="515.500" cy="1030" r="6" fill="#4285f4"/>
</g>

<ellipse cx="577" cy="1030" rx="15" ry="15.500" fill="#d8192a"/>
<ellipse cx="577" cy="1030" rx="5.500" ry="11.500" fill="#a9752c" stroke="#9a1420" stroke-width="1.200"/>

<rect x="610" y="1011" width="58" height="38" fill="#cfae7e" stroke="#f4ead8" stroke-width="1"/>
<circle cx="639" cy="1030" r="15" fill="#f2efe9"/>
<path d="M631 1023l8 9 8-9M639 1032v9" fill="none" stroke="#d4141e" stroke-width="2.600"/>

<ellipse cx="701" cy="1030" rx="14" ry="14.500" fill="#2497d3"/>
<path d="M692 1030l16-7-3 14-4-3-2 3-1-5z" fill="#fff"/>

<ellipse cx="763" cy="1030" rx="16" ry="16" fill="#f87a04"/>
<path d="M763 1016l9 22-8-13zM752 1030c6-2 11 0 18 8-6-4-12-6-18-5zM750 1037c6-2 10-1 14 2-5-1-9-1-14 1z" fill="#fff"/>

<rect x="796.500" y="1011.500" width="57.500" height="37.500" fill="#ae9060" stroke="#cdb98e" stroke-width="1"/>
<path d="M810 1019l18-4v30l-18-3z" fill="#2a5ca8"/>
<rect x="828" y="1019" width="12" height="22" fill="#fff" stroke="#2a5ca8" stroke-width="1"/>
<path d="M830 1022h8M830 1025h8M830 1028h8M830 1031h8M830 1034h8M830 1037h8" stroke="#2a5ca8" stroke-width="1.300"/>
<text class="a" style="font-size:13px;font-weight:bold" x="812.500" y="1035" fill="#fff">W</text>

<!-- tray -->
<circle cx="1257.500" cy="1031" r="7.500" fill="#f5f0ea"/>
<path d="M1253.500 1027l4 4.500 4-4.500M1257.500 1031.500v4.500" fill="none" stroke="#d8141e" stroke-width="1.600"/>
<rect x="1273" y="1023" width="16" height="16" fill="#f07010"/>
<path d="M1277 1035l8-8M1279 1028l1 1M1283 1033l1 1M1278 1031l1 1" stroke="#fff" stroke-width="1.300"/>
<circle cx="1305" cy="1031" r="8" fill="#f87a04"/>
<path d="M1305 1024l4 10-4-6zM1299 1031c3-1 6 0 9 4-3-2-6-3-9-2zM1298 1035c3-1 5-1 7 1-3 0-4 0-7 0z" fill="#fff"/>
<path d="M1321 1036c1-7 6-11 15-11 1 6-3 11-10 12z" fill="#e8e4da" stroke="#555" stroke-width="1.100"/>
<circle cx="1353" cy="1031" r="8" fill="#2497d3"/>
<path d="M1348 1031l9-4-2 8-2-2-1 2-1-3z" fill="#fff"/>
<rect x="1369" y="1023" width="16" height="16" rx="2" fill="#1f6bd8"/>
<path d="M1372.500 1026l3.500 4.500 3.500-4.500M1376 1030v6" fill="none" stroke="#fff" stroke-width="1.400"/>
<circle cx="1381.500" cy="1036" r="3.500" fill="#e2492a"/>
<path d="M1394 1034l9-9 5 3-8 10z" fill="#d84a20"/>
<rect x="1420" y="1028" width="11" height="9" rx="3" fill="#dcb56a" stroke="#333" stroke-width=".8"/>
<path d="M1418 1026l3-2 3 3M1433 1026l-3-2-3 3" fill="none" stroke="#222" stroke-width="1.300"/>
<circle cx="1423" cy="1026" r="2" fill="#fff"/>
<rect x="1441" y="1023" width="15" height="16" fill="#1e88c8" stroke="#e0e0e0" stroke-width=".6"/>
<path d="M1444 1027l5 0M1445 1031h6M1444 1035h8" stroke="#fff" stroke-width="1.100"/>
<rect x="1466" y="1023" width="8" height="7" fill="#666"/>
<path d="M1466 1030h8l-1 8h-6z" fill="#3f3f3f"/>
<circle cx="1476.500" cy="1035.500" r="4.500" fill="#28a030"/>
<path d="M1474.500 1035.500l1.500 1.500 2.500-3" fill="none" stroke="#fff" stroke-width="1"/>
<path d="M1490 1023v16" stroke="#222" stroke-width="1.200"/>
<path d="M1491 1024h6l7 3-3 3 1 2h-11z" fill="#fff" stroke="#555" stroke-width=".7"/>
<path d="M1514 1038h2.500v-2h-2.500zM1518 1038h2.500v-5h-2.500zM1522 1038h2.500v-8h-2.500zM1526 1038h3v-12h-3z" fill="#eee" stroke="#444" stroke-width=".6"/>
<path d="M1538 1028h3l4-4v14l-4-4h-3z" fill="#eee" stroke="#444" stroke-width=".8"/>
<path d="M1547 1028c1.500 2 1.500 4 0 6M1550 1026c2.500 3 2.500 7 0 10" fill="none" stroke="#444" stroke-width="1"/>
<text class="a" style="font-size:12px" x="1569" y="1036" textLength="21" lengthAdjust="spacingAndGlyphs" fill="#f4f2ec">РУС</text>
<text class="a" style="font-size:12px" x="1621" y="1027" textLength="26.500" lengthAdjust="spacingAndGlyphs" fill="#f4f2ec">21:08</text>
<text class="a" style="font-size:12px" x="1607.600" y="1043.500" textLength="53" lengthAdjust="spacingAndGlyphs" fill="#f4f2ec">15.06.2023</text>
</svg>
</body></html>
